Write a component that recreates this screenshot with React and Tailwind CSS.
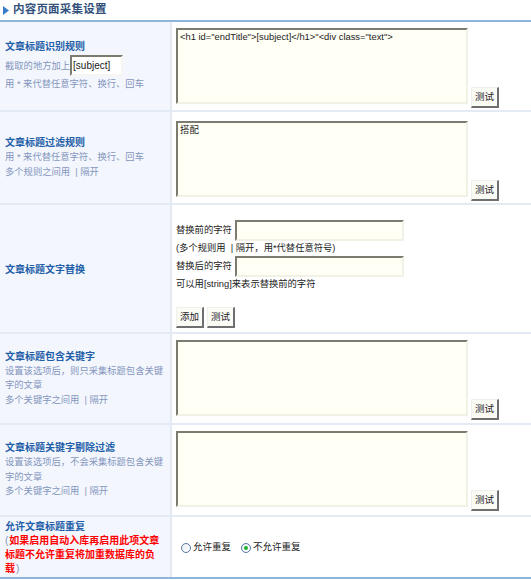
import React from "react";

// 采集规则设置 - 内容页面
const label = "text-[10px] font-bold leading-[14px] text-[#1f5ea8]";
const desc = "text-[9.3px] leading-[14.5px] text-[#8495bd]";
const inset =
  "border-2 border-t-[#7b7b70] border-l-[#7b7b70] border-r-[#f1f1e6] border-b-[#f1f1e6] bg-[#fffff6] outline-none";

function TestButton({ children = "测试" }) {
  return (
    <button className="h-[21px] w-[28px] shrink-0 border border-r-2 border-b-2 border-t-[#f0f0ea] border-l-[#f0f0ea] border-r-[#6f6f6f] border-b-[#6f6f6f] bg-[#fbfbf6] text-[9.5px] leading-none text-[#222]">
      {children}
    </button>
  );
}

function AreaWithTest({ value = "" }) {
  return (
    <div className="flex items-end">
      <textarea
        readOnly
        value={value}
        className={`${inset} mb-[4px] h-[76px] w-[292px] resize-none overflow-hidden px-[2px] py-[1px] text-[9.4px] leading-[12px] text-[#222]`}
      />
      <div className="ml-[3px]">
        <TestButton />
      </div>
    </div>
  );
}

function Row({ h, left, children }) {
  return (
    <div
      className="grid grid-cols-[172px_1fr] border-b-2 border-[#e3eaf4]"
      style={{ height: h }}
    >
      <div className="flex items-center border-r-2 border-[#e3eaf4] bg-[#f3f7fd] pl-[5px] pr-[3px]">
        <div className="w-full">{left}</div>
      </div>
      {children}
    </div>
  );
}

function Radio({ checked, children }) {
  return (
    <label className="flex items-center gap-[2px]">
      <span className="flex h-[10px] w-[10px] items-center justify-center rounded-full border border-[#56779f] bg-gradient-to-br from-[#e9eef4] to-white">
        {checked && <span className="h-[4px] w-[4px] rounded-full bg-[#22b12a]" />}
      </span>
      <span>{children}</span>
    </label>
  );
}

export default function App() {
  return (
    <div className="w-[531px] bg-white font-['Liberation_Sans','Noto_Sans_CJK_SC',sans-serif] text-[#222]">
      {/* 标题栏 */}
      <div className="flex h-[20px] items-center gap-[4px] pl-[3px]">
        <svg width="6" height="9" viewBox="0 0 6 9">
          <path d="M0 0 L6 4.5 L0 9 Z" fill="#3a7cc6" />
        </svg>
        <span className="text-[11.5px] font-bold tracking-[0.2px] text-[#32507a]">
          内容页面采集设置
        </span>
      </div>
      <div className="h-[2px] bg-[#8db5da]" />

      <Row
        h={90}
        left={
          <>
            <div className={label}>文章标题识别规则</div>
            <div className={`${desc} flex items-center py-[1px]`}>
              截取的地方加上
              <input
                readOnly
                value="[subject]"
                className="h-[21px] w-[53px] border-2 border-t-[#7b7b70] border-l-[#7b7b70] border-r-[#f6f6f0] border-b-[#f6f6f0] bg-white px-[1px] text-[10px] text-[#222] outline-none"
              />
            </div>
            <div className={desc}>用 * 来代替任意字符、换行、回车</div>
          </>
        }
      >
        <div className="flex items-center pl-[4px] pt-[4px]">
          <AreaWithTest value={'<h1 id="endTitle">[subject]</h1>"<div class="text">'} />
        </div>
      </Row>

      <Row
        h={93}
        left={
          <>
            <div className={label}>文章标题过滤规则</div>
            <div className={desc}>用 * 来代替任意字符、换行、回车</div>
            <div className={desc}>多个规则之间用 &nbsp;| 隔开</div>
          </>
        }
      >
        <div className="flex items-center pl-[4px] pt-[6px]">
          <AreaWithTest value="搭配" />
        </div>
      </Row>

      <Row h={129} left={<div className={`${label} mt-[2px]`}>文章标题文字替换</div>}>
        <div className="pl-[4px] pt-[15px] text-[9.3px] text-[#222]">
          <div className="flex items-center gap-[3px]">
            替换前的字符
            <input readOnly className={`${inset} h-[21px] w-[169px]`} />
          </div>
          <div className="leading-[15px]">(多个规则用 &nbsp;| 隔开，用*代替任意符号)</div>
          <div className="flex items-center gap-[3px]">
            替换后的字符
            <input readOnly className={`${inset} h-[21px] w-[169px]`} />
          </div>
          <div className="leading-[15px]">可以用[string]来表示替换前的字符</div>
          <div className="mt-[15px] flex gap-[3px]">
            <TestButton>添加</TestButton>
            <TestButton />
          </div>
        </div>
      </Row>

      <Row
        h={91}
        left={
          <>
            <div className={label}>文章标题包含关键字</div>
            <div className={desc}>设置该选项后，则只采集标题包含关键字的文章</div>
            <div className={desc}>多个关键字之间用 &nbsp;| 隔开</div>
          </>
        }
      >
        <div className="flex items-center pl-[4px] pt-[2px]">
          <AreaWithTest />
        </div>
      </Row>

      <Row
        h={92}
        left={
          <>
            <div className={label}>文章标题关键字剔除过滤</div>
            <div className={desc}>设置该选项后，不会采集标题包含关键字的文章</div>
            <div className={desc}>多个关键字之间用 &nbsp;| 隔开</div>
          </>
        }
      >
        <div className="flex items-center pl-[4px] pt-[2px]">
          <AreaWithTest />
        </div>
      </Row>

      <div className="grid h-[62px] grid-cols-[172px_1fr] border-b-2 border-[#8db5da]">
        <div className="flex items-center border-r-2 border-[#e3eaf4] bg-[#f3f7fd] pl-[5px] pr-[3px]">
          <div className="pt-[2px]">
            <div className={label}>允许文章标题重复</div>
            <p className="text-[10px] leading-[14px] text-[#8495bd]">
              (<b className="ml-[1px] text-[#ff0000]">如果启用自动入库再启用此项文章标题不允许重复将加重数据库的负载</b>
              <span className="ml-[1px]">)</span>
            </p>
          </div>
        </div>
        <div className="flex items-center gap-[10px] pl-[9px] pt-[1px] text-[9.5px] text-[#222]">
          <Radio>允许重复</Radio>
          <Radio checked>不允许重复</Radio>
        </div>
      </div>
    </div>
  );
}
